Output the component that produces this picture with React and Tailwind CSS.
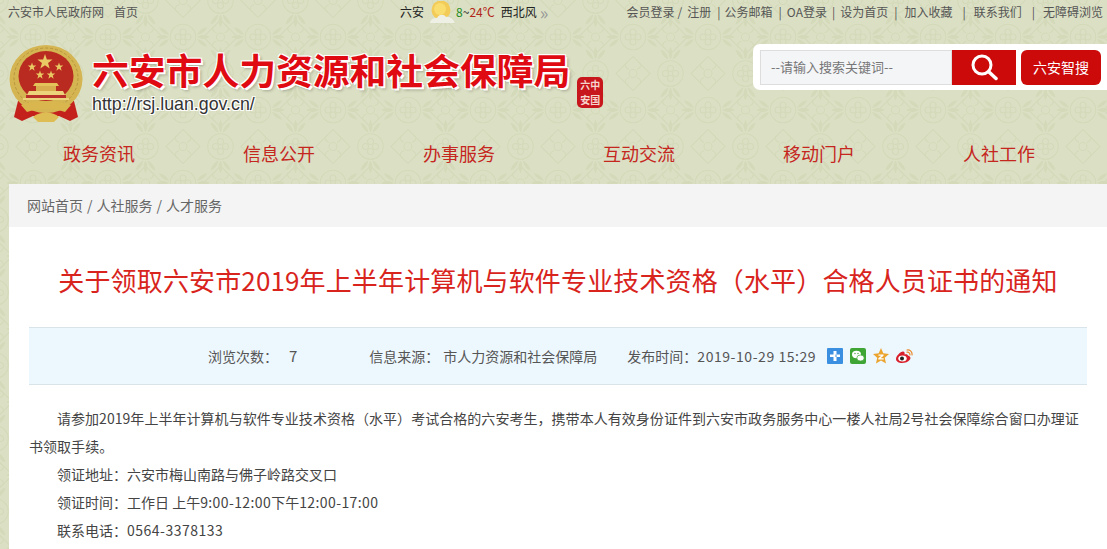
const NAV = ["政务资讯", "信息公开", "办事服务", "互动交流", "移动门户", "人社工作"];

const Pattern = () => (
  <svg className="absolute inset-0 h-full w-full" aria-hidden="true">
    <defs>
      <g id="scroll" fill="none" stroke="#d3d9b9" strokeWidth="1.100">
        <circle cx="0" cy="-5" r="3" />
        <circle cx="0" cy="5" r="3" />
        <circle cx="-5" cy="0" r="3" />
        <circle cx="5" cy="0" r="3" />
        <path d="M-9-9C-14-4-14 4-9 9C-4 14 4 14 9 9C14 4 14-4 9-9C4-14-4-14-9-9Z" />
      </g>
      <g id="fan" fill="#d3d9b9">
        <path d="M0-14C-3-19-2-23 0-27C2-23 3-19 0-14Z" />
        <path d="M-2-14C-7-16-9-20-10-24C-6-23-3-19-2-14Z" />
        <path d="M2-14C7-16 9-20 10-24C6-23 3-19 2-14Z" />
      </g>
      <g id="diamond" fill="none" stroke="#d3d9b9" strokeWidth="1.100">
        <path d="M0-17L17 0L0 17L-17 0Z" />
        <circle cx="0" cy="0" r="4" />
        <path d="M-4-4C-9-6-9-11-5-11M4-4C9-6 9-11 5-11M-4 4C-9 6-9 11-5 11M4 4C9 6 9 11 5 11" />
      </g>
      <pattern id="bg" width="75" height="73" patternUnits="userSpaceOnUse" patternTransform="translate(33 37)">
        <g transform="translate(0 0)">
          <use href="#scroll" />
          <use href="#fan" transform="rotate(90)" />
          <use href="#fan" transform="rotate(-90)" />
        </g>
        <g transform="translate(75 0)">
          <use href="#scroll" />
          <use href="#fan" transform="rotate(-90)" />
        </g>
        <g transform="translate(0 73)">
          <use href="#scroll" />
          <use href="#fan" transform="rotate(90)" />
          <use href="#fan" transform="rotate(-90)" />
        </g>
        <g transform="translate(75 73)">
          <use href="#scroll" />
          <use href="#fan" transform="rotate(-90)" />
        </g>
        <g transform="translate(37.500 36.500)">
          <use href="#scroll" />
          <use href="#fan" />
          <use href="#fan" transform="rotate(180)" />
        </g>
        <use href="#diamond" x="0" y="36.500" />
        <use href="#diamond" x="75" y="36.500" />
        <use href="#diamond" x="37.500" y="0" />
        <use href="#diamond" x="37.500" y="73" />
      </pattern>
    </defs>
    <rect width="100%" height="100%" fill="url(#bg)" />
  </svg>
);

const Star = ({ cx, cy, r }) => {
  const pts = [];
  for (let i = 0; i < 10; i++) {
    const a = (Math.PI / 5) * i - Math.PI / 2;
    const d = i % 2 === 0 ? r : r * 0.4;
    pts.push(`${cx + d * Math.cos(a)},${cy + d * Math.sin(a)}`);
  }
  return <polygon points={pts.join(" ")} fill="#e9c964" />;
};

const Emblem = () => (
  <svg width="74" height="78" viewBox="0 0 74 78" className="mt-px shrink-0">
    <path d="M9 56L5 72L13 76L24 71L50 71L61 76L69 72L65 56Z" fill="#c4211d" />
    <ellipse cx="37" cy="34" rx="36.500" ry="34" fill="#d5b552" />
    <ellipse cx="37" cy="33" rx="32" ry="30" fill="none" stroke="#b8953c" strokeWidth="1" strokeDasharray="3 2" />
    <ellipse cx="37" cy="31" rx="27.500" ry="25" fill="#b92a20" />
    <Star cx={36} cy={17} r={8} />
    <Star cx={23} cy={22} r={4.500} />
    <Star cx={50} cy={22} r={4.500} />
    <Star cx={31} cy={30} r={4.500} />
    <Star cx={42} cy={30} r={4.500} />
    <path d="M26 38H48L50 41H24Z" fill="#e3c25a" />
    <rect x="27" y="41" width="20" height="5" fill="#d7ad4d" />
    <path d="M20 46H54L56 50H18Z" fill="#ecd27a" />
    <rect x="17" y="50" width="40" height="3" fill="#b9302a" />
    <rect x="14" y="53" width="46" height="2" fill="#ecd27a" />
    <path d="M12 60C24 55 50 55 62 60L56 67C46 63 28 63 18 67Z" fill="#d9b74e" />
    <path d="M12 66L6 70L12 74L22 70ZM62 66L68 70L62 74L52 70Z" fill="#c4211d" />
    <path d="M24 72C30 66 44 66 50 72L45 77H29Z" fill="#dfbd55" />
  </svg>
);

const Seal = () => (
  <div className="mt-[33px] ml-[7px] flex h-[31px] w-[26px] shrink-0 flex-wrap items-center justify-center rounded-[5px] bg-[#c8161d] text-[10px] leading-[14px] font-bold text-[#f6d5cd]">
    <span>六</span>
    <span>中</span>
    <span>安</span>
    <span>国</span>
  </div>
);

const Sun = () => (
  <svg width="26" height="23" viewBox="0 0 26 23" className="mr-[1px] ml-[5px]">
    <circle cx="12" cy="9" r="9.500" fill="#f3cb58" />
    <circle cx="11" cy="8" r="6" fill="#f9dd6e" />
    <path d="M1 21C3 17 6 17 8 17C10 13 15 13 17 16C20 15 24 17 26 22H1Z" fill="#eef0e6" />
  </svg>
);

const ShareIcons = () => (
  <div className="ml-[11px] flex items-center gap-[7px]">
    <svg width="16" height="16" viewBox="0 0 16 16">
      <rect width="16" height="16" rx="1" fill="#3b8fe0" />
      <path d="M6.500 3h3v3.500H13V9H9.500v4h-3V9H3V6.500h3.500z" fill="#fff" />
      <path d="M8.500 6.500h1V9h-1z" fill="#3b8fe0" />
    </svg>
    <svg width="16" height="16" viewBox="0 0 16 16">
      <rect width="16" height="16" rx="2" fill="#3fa535" />
      <ellipse cx="6.500" cy="6.500" rx="4.500" ry="3.700" fill="#fff" />
      <ellipse cx="10.500" cy="10" rx="3.700" ry="3" fill="#fff" stroke="#3fa535" strokeWidth="0.700" />
      <circle cx="5" cy="5.500" r="0.700" fill="#3fa535" />
      <circle cx="8" cy="5.500" r="0.700" fill="#3fa535" />
    </svg>
    <svg width="16" height="16" viewBox="0 0 16 16">
      <path d="M8 0l2.300 5.300L16 6l-4.200 3.800L13 15.500 8 12.600 3 15.500l1.200-5.700L0 6l5.700-.7z" fill="#eba52f" />
      <path d="M5.500 6.500h5v1.200L7.500 10.200h3.200v1.300H5.300v-1.200l3-2.500H5.500z" fill="#fff" />
    </svg>
    <svg width="17" height="16" viewBox="0 0 17 16">
      <path d="M12 7.500C14.500 8 15 10 14 11.500C12.500 14 9 15 6 15C3 15 0 13.500 0 11C0 8 4.500 3.500 7 3.500C8.500 3.500 9 5 8.500 6.500C10 6 11.500 6.300 12 7.500Z" fill="#d7202c" />
      <ellipse cx="6.500" cy="10.500" rx="4.200" ry="3" fill="#fff" />
      <circle cx="6" cy="10.500" r="2" fill="#222" />
      <path d="M11 2C14 1.500 16.500 4 16 7M11 4.200C12.800 3.900 14.200 5.300 13.900 7" fill="none" stroke="#ea8a2c" strokeWidth="1.200" strokeLinecap="round" />
    </svg>
  </div>
);

const App = () => {
  return (
    <div className="relative h-[549px] w-full overflow-hidden bg-[#dbe0c4] [font-family:'Noto_Sans_CJK_SC',sans-serif]">
      <Pattern />
      <div className="relative">
        {/* top links */}
        <div className="flex h-[24px] items-center pr-[4px] pl-[8px] text-[12px] text-[#555]">
          <span>六安市人民政府网</span>
          <span className="ml-[10px]">首页</span>
          <div className="ml-[262px] flex items-center text-[#222]">
            <span>六安</span>
            <Sun />
            <span className="text-[#1a8a1a]">8</span>
            <span>~</span>
            <span className="text-[#b3261a]">24℃</span>
            <span className="ml-[6px]">西北风</span>
            <span className="ml-[3px] text-[18px] leading-none text-[#999]">»</span>
          </div>
          <div className="ml-auto flex items-center whitespace-nowrap">
            <span>会员登录</span>
            <span className="ml-[3px]">/</span>
            <span className="ml-[5px]">注册</span>
            <span className="ml-[6px]">|</span>
            <span className="ml-[4px]">公务邮箱</span>
            <span className="ml-[6px]">|</span>
            <span className="ml-[5px]">OA登录</span>
            <span className="ml-[5px]">|</span>
            <span className="ml-[5px]">设为首页</span>
            <span className="ml-[6px]">|</span>
            <span className="ml-[7px]">加入收藏</span>
            <span className="ml-[10px]">|</span>
            <span className="ml-[8px]">联系我们</span>
            <span className="ml-[10px]">|</span>
            <span className="ml-[8px]">无障碍浏览</span>
          </div>
        </div>

        {/* logo and search */}
        <div className="flex h-[98px] pt-[20px] pl-[9px]">
          <Emblem />
          <div className="ml-[9px]">
            <div className="text-[36.800px] leading-[50px] font-bold whitespace-nowrap text-[#e00b12] [text-shadow:2px_2px_0_#fff,-1px_-1px_0_#fff,1px_-1px_0_#fff,-1px_1px_0_#fff,3px_3px_3px_rgba(0,0,0,.25)]">
              六安市人力资源和社会保障局
            </div>
            <div className="text-[17.800px] leading-[20px] text-[#333] [font-family:'Liberation_Sans',sans-serif] [text-shadow:1px_1px_0_#fff,-1px_-1px_0_#fff,1px_-1px_0_#fff,-1px_1px_0_#fff]">
              http://rsj.luan.gov.cn/
            </div>
          </div>
          <Seal />
          <div className="ml-auto flex h-[46px] w-[354px] items-center rounded-l-[7px] bg-white pl-[7px]">
            <div className="flex h-[35px] w-[192px] items-center border border-[#ddd] bg-[#f4f5f7] pl-[10px] text-[13px] text-[#777]">
              --请输入搜索关键词--
            </div>
            <div className="flex h-[35px] w-[64px] items-center justify-center bg-[#cc0a0a]">
              <svg width="28" height="28" viewBox="0 0 28 28" fill="none" stroke="#fff" strokeLinecap="round">
                <circle cx="12" cy="12" r="9" strokeWidth="3" />
                <path d="M19 19L26 25.500" strokeWidth="3.500" />
              </svg>
            </div>
            <div className="ml-[5px] flex h-[35px] w-[80px] items-center justify-center rounded-[6px] bg-[#cc0a0a] text-[14px] text-white">
              六安智搜
            </div>
          </div>
        </div>

        {/* nav */}
        <div className="flex h-[62px] items-center pt-[1px] pl-[9px]">
          {NAV.map((item) => (
            <div key={item} className="w-[180px] text-center text-[18px] text-[#c5261e]">
              {item}
            </div>
          ))}
        </div>

        {/* content */}
        <div className="ml-[9px] bg-white pb-[40px]">
          <div className="flex h-[43px] items-center bg-[#f4f4f4] pl-[18px] text-[14px] text-[#666]">
            <span>网站首页</span>
            <span className="mx-[4px]">/</span>
            <span>人社服务</span>
            <span className="mx-[4px]">/</span>
            <span>人才服务</span>
          </div>
          <div className="px-[20px]">
            <h1 className="pt-[34px] text-center text-[26px] leading-[38px] font-normal tracking-[0.14px] whitespace-nowrap text-[#d8241c]">
              关于领取六安市2019年上半年计算机与软件专业技术资格（水平）合格人员证书的通知
            </h1>
            <div className="mt-[28px] flex h-[58px] items-center border-y border-[#d9e4ea] bg-[#edf7fe] pl-[179px] text-[14px] text-[#555]">
              <span>浏览次数：</span>
              <span className="ml-[11px] text-[15px]">7</span>
              <span className="ml-[72px]">信息来源：</span>
              <span className="ml-[4px]">市人力资源和社会保障局</span>
              <span className="ml-[30px]">发布时间：</span>
              <span className="tracking-[0.55px]">2019-10-29 15:29</span>
              <ShareIcons />
            </div>
            <div className="mt-[19px] text-[14px] leading-[28px] text-[#444]">
              <p className="indent-[28px] tracking-[0.04px]">
                请参加2019年上半年计算机与软件专业技术资格（水平）考试合格的六安考生，携带本人有效身份证件到六安市政务服务中心一楼人社局2号社会保障综合窗口办理证书领取手续。
              </p>
              <p className="indent-[28px]">领证地址：六安市梅山南路与佛子岭路交叉口</p>
              <p className="indent-[28px]">
                领证时间：工作日 上午<span className="tracking-[0.4px]">9:00-12:00</span>下午<span className="tracking-[0.4px]">12:00-17:00</span>
              </p>
              <p className="indent-[28px]">
                联系电话：<span className="tracking-[0.5px]">0564-3378133</span>
              </p>
            </div>
          </div>
        </div>
      </div>
    </div>
  );
};

export default App;
